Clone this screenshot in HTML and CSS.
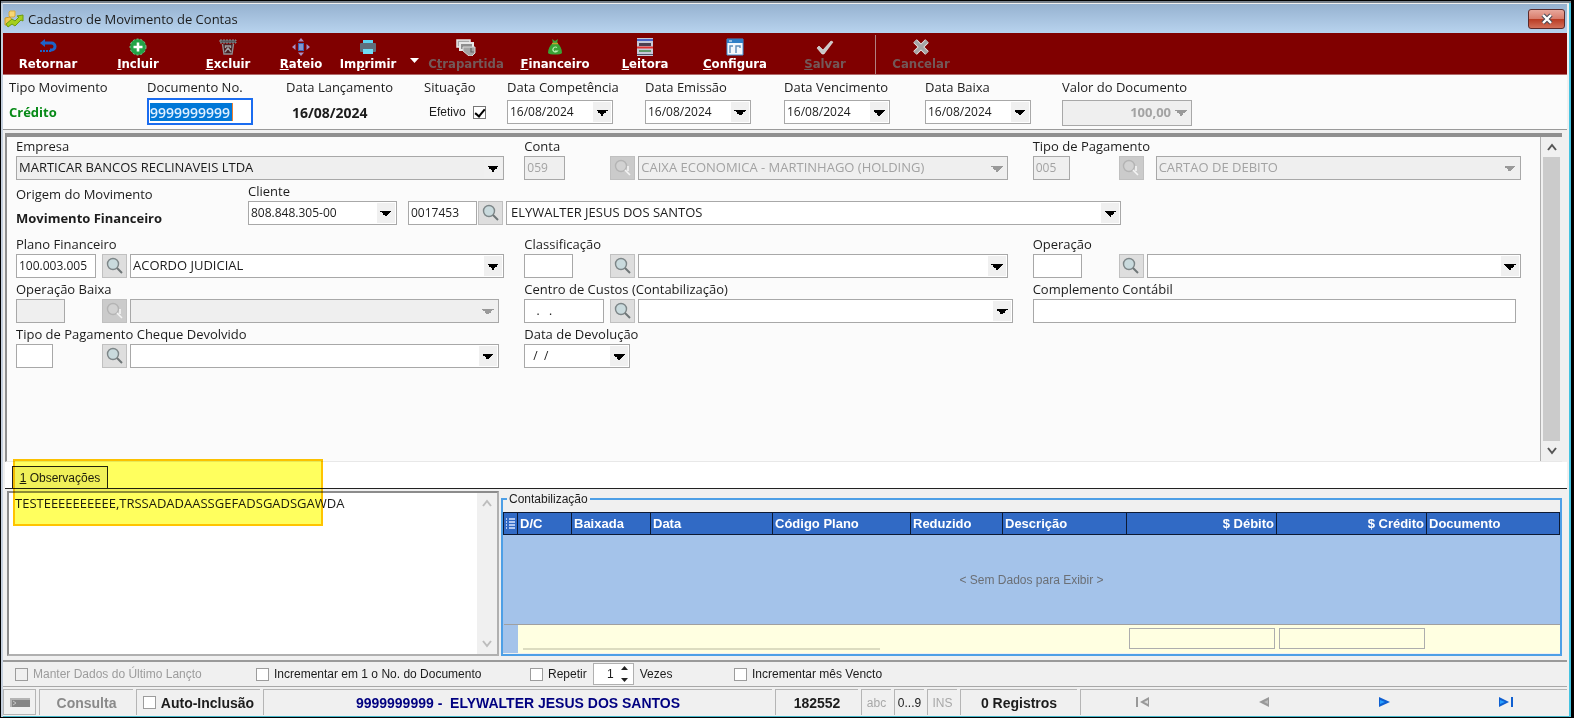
FILE: index.html
```html
<!DOCTYPE html>
<html lang="pt-BR">
<head>
    <meta charset="UTF-8">
    <meta name="viewport" content="width=device-width, initial-scale=1.0">
    <title>Cadastro de Movimento de Contas</title>
    <link rel="stylesheet" href="styles.css">
</head>
<body>
    <svg class="defs" aria-hidden="true">
        <symbol id="lupa" viewBox="0 0 18 18">
            <circle cx="7" cy="7" r="5.500" fill="#c9dadd" stroke="#7d8688" stroke-width="1.4"/>
            <path d="M11 11l5 5" stroke="#6f7678" stroke-width="2"/>
        </symbol>
        <symbol id="lupa-off" viewBox="0 0 18 18">
            <circle cx="7" cy="7" r="5.500" fill="#d2d2d2" stroke="#b4b4b4" stroke-width="1.4"/>
            <path d="M11 11l5 5M14 7v5" stroke="#f4f4f4" stroke-width="1.6"/>
        </symbol>
        <symbol id="seta-cima" viewBox="0 0 10 8"><path d="M1 7l4-5 4 5" fill="none" stroke="currentColor" stroke-width="2"/></symbol>
        <symbol id="seta-baixo" viewBox="0 0 10 8"><path d="M1 1l4 5 4-5" fill="none" stroke="currentColor" stroke-width="2"/></symbol>
    </svg>

    <div class="window">
        <header class="titlebar">
            <svg width="20" height="18" viewBox="0 0 20 18">
                <path d="M6 1h5v5l-1 1H6L5 6V2z" fill="#f7d774" stroke="#d9a93a"/>
                <path d="M1 8l5-1 3 4-3 4H1z" fill="#f3c752" stroke="#c99a2b"/>
                <path d="M2 14l6-5 3 2 4-4-2-1 6-1v6l-2-1-6 6-3-2-4 3z" fill="#a5cf1c" stroke="#6d9a10"/>
            </svg>
            <h1>Cadastro de Movimento de Contas</h1>
            <button class="close" type="button" aria-label="Fechar">
                <svg width="14" height="12" viewBox="0 0 14 12"><path d="M3 2l8 8M11 2l-8 8" stroke="#4a4a55" stroke-width="4.4"/><path d="M3 2l8 8M11 2l-8 8" stroke="#fff" stroke-width="2.4"/></svg>
            </button>
        </header>

        <nav class="toolbar">
            <button type="button">
                <svg width="18" height="18" viewBox="0 0 18 18"><path d="M5 5h7.500a3.500 3.500 0 0 1 0 7H11" fill="none" stroke="#1d63c9" stroke-width="3"/><path d="M1 5l5-4v8z" fill="#1d63c9"/><path d="M1 13h11" stroke="#1d63c9" stroke-width="2" stroke-dasharray="2 1"/></svg>
                <span>Retornar</span>
            </button>
            <button type="button">
                <svg width="18" height="18" viewBox="0 0 18 18"><circle cx="9" cy="9" r="8" fill="#22a447" stroke="#7fc795" stroke-dasharray="2 2"/><path d="M9 4.500v9M4.500 9h9" stroke="#fff" stroke-width="2.600"/></svg>
                <span><u>I</u>ncluir</span>
            </button>
            <button type="button">
                <svg width="18" height="18" viewBox="0 0 18 18"><path d="M1 2h16v3H1z" fill="#58585c" stroke="#8c8c90" stroke-dasharray="2 1"/><path d="M3.500 6l1.500 10h8l1.500-10" fill="#4a2022" stroke="#8f8f93" stroke-width="1.400"/><path d="M6 14l3-4 3 4M6.500 10V8h5v2" fill="none" stroke="#a0a0a4" stroke-width="1.400"/></svg>
                <span><u>E</u>xcluir</span>
            </button>
            <button type="button" class="w-small">
                <svg width="18" height="18" viewBox="0 0 18 18"><rect x="6" y="5" width="6" height="8" fill="#3f63b5"/><path d="M7 7h4M7 9h4M7 11h4" stroke="#c3cdea"/><path d="M9 0l3 3.500H6zM9 18l3-3.500H6zM0 9l3.500-3v6zM18 9l-3.500-3v6z" fill="#a98fc4"/></svg>
                <span><u>R</u>ateio</span>
            </button>
            <button type="button" class="w-print">
                <svg width="18" height="18" viewBox="0 0 18 18"><path d="M4 2h10v4H4z" fill="#5fd3f0"/><rect x="1" y="5" width="16" height="9" rx="1" fill="#5f6f7d"/><path d="M4 11h10v5H4z" fill="#6fdcf5"/></svg>
                <span>Im<u>p</u>rimir</span>
            </button>
            <button type="button" class="w-arrow" aria-label="Opções de impressão">
                <svg width="9" height="5" viewBox="0 0 9 5"><path d="M0 0h9L4.500 5z" fill="#fff"/></svg>
            </button>
            <button type="button" class="w-contra" disabled>
                <svg width="20" height="18" viewBox="0 0 20 18"><path d="M1 2h13v7H1z" fill="#a9a9a9" stroke="#e8e8e8" stroke-width="1.500"/><path d="M4 5h13v7H4z" fill="#8e8e8e" stroke="#e8e8e8" stroke-width="2"/><path d="M7 9h12v6l-3 3h-3l-6-5z" fill="#a4a4a4" stroke="#d8d8d8"/><path d="M15 10v4h3" fill="none" stroke="#666" stroke-width="1.200"/></svg>
                <span>C<u>t</u>rapartida</span>
            </button>
            <button type="button">
                <svg width="18" height="18" viewBox="0 0 18 18"><path d="M7 5L6 1l3 2 3-2-1 4c3 2 5 6 5 10-1 2-13 2-14 0 0-4 2-8 5-10z" fill="#3aa336"/><path d="M6 5.500h6" stroke="#c0a02c" stroke-width="1.500"/><path d="M11 9.500a2.500 2.500 0 1 0 .500 3.500H9" fill="none" stroke="#b9eeb0" stroke-width="1.200"/></svg>
                <span><u>F</u>inanceiro</span>
            </button>
            <button type="button">
                <svg width="18" height="18" viewBox="0 0 18 18"><path d="M1 0h16v18H1z" fill="#c7c9d8"/><path d="M1 1h16v2H1z" fill="#4a62c4"/><path d="M3 5h12v3H3z" fill="#4d4050"/><path d="M1 9.500h16" stroke="#e03030" stroke-width="2"/><path d="M3 12h12v2H3z" fill="#5f9a6a"/><path d="M1 16.500h16" stroke="#50556c"/></svg>
                <span><u>L</u>eitora</span>
            </button>
            <button type="button">
                <svg width="18" height="18" viewBox="0 0 18 18"><path d="M1 1h16v16H1z" fill="#f4f8fc" stroke="#3f93d6"/><path d="M1 1h16v4H1z" fill="#2f7fc6"/><path d="M3 3h3" stroke="#fff"/><path d="M4 15V8h3M10 15V8h4v2" fill="none" stroke="#5d8db8" stroke-width="1.400"/></svg>
                <span><u>C</u>onfigura</span>
            </button>
            <button type="button" disabled>
                <svg width="18" height="18" viewBox="0 0 18 18"><path d="M1 10l2-2 4 4 8-9 2 1-9 12H6z" fill="#c9c9c9" stroke="#efefef" stroke-width=".6"/></svg>
                <span><u>S</u>alvar</span>
            </button>
            <i class="tool-sep"></i>
            <button type="button" disabled>
                <svg width="18" height="18" viewBox="0 0 18 18"><path d="M3 3l12 12M15 3L3 15" stroke="#f0f0f0" stroke-width="5"/><path d="M3 3l12 12M15 3L3 15" stroke="#a5a5a5" stroke-width="3.400"/></svg>
                <span>Cancelar</span>
            </button>
        </nav>

        <section class="top-fields">
            <div class="field">
                <span class="label">Tipo Movimento</span>
                <strong class="value credit">Crédito</strong>
            </div>
            <div class="field">
                <label for="documento">Documento No.</label>
                <div class="doc-box"><input id="documento" type="text" value="9999999999"></div>
            </div>
            <div class="field">
                <span class="label">Data Lançamento</span>
                <strong class="value date">16/08/2024</strong>
            </div>
            <div class="field">
                <span class="label">Situação</span>
                <label class="value check effective"><span>Efetivo</span><input type="checkbox" checked></label>
            </div>
            <div class="field">
                <label for="competencia">Data Competência</label>
                <select id="competencia" class="combo date-combo"><option>16/08/2024</option></select>
            </div>
            <div class="field">
                <label for="emissao">Data Emissão</label>
                <select id="emissao" class="combo date-combo"><option>16/08/2024</option></select>
            </div>
            <div class="field">
                <label for="vencimento">Data Vencimento</label>
                <select id="vencimento" class="combo date-combo"><option>16/08/2024</option></select>
            </div>
            <div class="field">
                <label for="baixa">Data Baixa</label>
                <select id="baixa" class="combo date-combo"><option>16/08/2024</option></select>
            </div>
            <div class="field">
                <label for="valor">Valor do Documento</label>
                <select id="valor" class="combo amount" disabled><option>100,00</option></select>
            </div>
        </section>

        <section class="pane">
            <form class="form">
                <div class="field">
                    <label for="empresa">Empresa</label>
                    <div class="line"><select id="empresa" class="combo grow readonly"><option>MARTICAR BANCOS RECLINAVEIS LTDA</option></select></div>
                </div>
                <div class="field">
                    <label for="conta">Conta</label>
                    <div class="line short">
                        <div class="code"><input id="conta" class="text w41" type="text" value="059" disabled></div>
                        <button type="button" class="search" aria-label="Buscar conta" disabled><svg><use href="#lupa-off"/></svg></button>
                        <select class="combo grow" aria-label="Conta" disabled><option>CAIXA ECONOMICA - MARTINHAGO (HOLDING)</option></select>
                    </div>
                </div>
                <div class="field">
                    <label for="tipo-pag">Tipo de Pagamento</label>
                    <div class="line">
                        <div class="code"><input id="tipo-pag" class="text w37" type="text" value="005" disabled></div>
                        <button type="button" class="search spaced" aria-label="Buscar tipo de pagamento" disabled><svg><use href="#lupa-off"/></svg></button>
                        <select class="combo grow" aria-label="Tipo de pagamento" disabled><option>CARTAO DE DEBITO</option></select>
                    </div>
                </div>

                <div class="client-row">
                    <div class="origin">
                        <span>Origem do Movimento</span>
                        <strong>Movimento Financeiro</strong>
                    </div>
                    <div class="field">
                        <label for="cliente">Cliente</label>
                        <div class="line">
                            <select id="cliente" class="combo client-doc"><option>808.848.305-00</option></select>
                            <input class="text client-code" type="text" value="0017453" aria-label="Código do cliente">
                            <button type="button" class="search" aria-label="Buscar cliente"><svg><use href="#lupa"/></svg></button>
                            <select class="combo client-name" aria-label="Nome do cliente"><option>ELYWALTER JESUS DOS SANTOS</option></select>
                        </div>
                    </div>
                </div>

                <div class="field">
                    <label for="plano">Plano Financeiro</label>
                    <div class="line">
                        <div class="code"><input id="plano" class="text w80" type="text" value="100.003.005"></div>
                        <button type="button" class="search" aria-label="Buscar plano"><svg><use href="#lupa"/></svg></button>
                        <select class="combo grow" aria-label="Plano financeiro"><option>ACORDO JUDICIAL</option></select>
                    </div>
                </div>
                <div class="field">
                    <label for="classificacao">Classificação</label>
                    <div class="line short">
                        <div class="code"><input id="classificacao" class="text w50" type="text"></div>
                        <button type="button" class="search" aria-label="Buscar classificação"><svg><use href="#lupa"/></svg></button>
                        <select class="combo grow" aria-label="Classificação"><option></option></select>
                    </div>
                </div>
                <div class="field">
                    <label for="operacao">Operação</label>
                    <div class="line">
                        <div class="code"><input id="operacao" class="text w50" type="text"></div>
                        <button type="button" class="search" aria-label="Buscar operação"><svg><use href="#lupa"/></svg></button>
                        <select class="combo grow" aria-label="Operação"><option></option></select>
                    </div>
                </div>

                <div class="field">
                    <label for="op-baixa">Operação Baixa</label>
                    <div class="line short">
                        <div class="code"><input id="op-baixa" class="text w50" type="text" disabled></div>
                        <button type="button" class="search" aria-label="Buscar operação baixa" disabled><svg><use href="#lupa-off"/></svg></button>
                        <select class="combo grow" aria-label="Operação baixa" disabled><option></option></select>
                    </div>
                </div>
                <div class="field">
                    <label for="centro">Centro de Custos (Contabilização)</label>
                    <div class="line">
                        <div class="code"><input id="centro" class="text w80 mask" type="text" value=" .   ."></div>
                        <button type="button" class="search" aria-label="Buscar centro de custos"><svg><use href="#lupa"/></svg></button>
                        <select class="combo grow" aria-label="Centro de custos"><option></option></select>
                    </div>
                </div>
                <div class="field">
                    <label for="complemento">Complemento Contábil</label>
                    <div class="line short"><input id="complemento" class="text grow" type="text"></div>
                </div>

                <div class="field">
                    <label for="cheque">Tipo de Pagamento Cheque Devolvido</label>
                    <div class="line short">
                        <div class="code"><input id="cheque" class="text w37" type="text"></div>
                        <button type="button" class="search" aria-label="Buscar tipo de pagamento"><svg><use href="#lupa"/></svg></button>
                        <select class="combo grow" aria-label="Tipo de pagamento cheque devolvido"><option></option></select>
                    </div>
                </div>
                <div class="field">
                    <label for="devolucao">Data de Devolução</label>
                    <select id="devolucao" class="combo date-combo mask"><option>/&nbsp; /</option></select>
                </div>
            </form>
            <div class="scroll">
                <svg><use href="#seta-cima"/></svg>
                <i></i>
                <svg><use href="#seta-baixo"/></svg>
            </div>
        </section>

        <section class="bottom">
            <div class="tabs"><button type="button" class="tab"><u>1</u> Observações</button></div>
            <div class="highlight"></div>
            <div class="panels">
                <div class="memo">
                    <textarea aria-label="Observações" spellcheck="false">TESTEEEEEEEEEE,TRSSADADAASSGEFADSGADSGAWDA</textarea>
                    <div class="scroll off">
                        <svg><use href="#seta-cima"/></svg>
                        <svg><use href="#seta-baixo"/></svg>
                    </div>
                </div>
                <fieldset class="group">
                    <legend>Contabilização</legend>
                    <table>
                        <colgroup>
                            <col class="c-mark"><col class="c-dc"><col class="c-baixada"><col class="c-data"><col class="c-codigo">
                            <col class="c-reduzido"><col class="c-descricao"><col class="c-valor"><col class="c-valor"><col>
                        </colgroup>
                        <thead>
                            <tr>
                                <th><svg width="9" height="12" viewBox="0 0 9 12"><path d="M0 1h1M0 4h1M0 7h1M0 10h1M3 1h6M3 4h6M3 7h6M3 10h6" stroke="#dfe9ff" stroke-width="1.400"/></svg></th>
                                <th>D/C</th>
                                <th>Baixada</th>
                                <th>Data</th>
                                <th>Código Plano</th>
                                <th>Reduzido</th>
                                <th>Descrição</th>
                                <th class="num">$ Débito</th>
                                <th class="num">$ Crédito</th>
                                <th>Documento</th>
                            </tr>
                        </thead>
                        <tbody>
                            <tr><td colspan="10">&lt; Sem Dados para Exibir &gt;</td></tr>
                        </tbody>
                        <tfoot>
                            <tr>
                                <td class="mark"></td>
                                <td colspan="6"><div class="hscroll"></div></td>
                                <td><div class="total"></div></td>
                                <td><div class="total"></div></td>
                                <td></td>
                            </tr>
                        </tfoot>
                    </table>
                </fieldset>
            </div>
        </section>

        <section class="options">
            <label class="check off"><input type="checkbox" disabled><span>Manter Dados do Último Lançto</span></label>
            <label class="check"><input type="checkbox"><span>Incrementar em 1 o No. do Documento</span></label>
            <div class="repeat">
                <label class="check"><input type="checkbox"><span>Repetir</span></label>
                <div class="spinner">
                    <input type="text" value="1" id="vezes">
                    <svg width="9" height="16" viewBox="0 0 9 16"><path d="M1 4l3.500-4L8 4zM1 12l3.500 4L8 12z" fill="#222"/></svg>
                </div>
                <label for="vezes">Vezes</label>
            </div>
            <label class="check"><input type="checkbox"><span>Incrementar mês Vencto</span></label>
        </section>

        <footer class="status">
            <button type="button" class="cell-btn" aria-label="Painel"><svg width="20" height="9" viewBox="0 0 20 9"><path d="M0 0h20v9H0z" fill="#858585"/><path d="M1 9V1h19" fill="none" stroke="#b4b4b4" stroke-width="2"/><path d="M3 3l3 2-3 2" fill="none" stroke="#c4c4c4"/></svg></button>
            <div class="cell consulta">Consulta</div>
            <label class="cell auto check"><input type="checkbox"><span>Auto-Inclusão</span></label>
            <div class="cell person">9999999999 -&nbsp; ELYWALTER JESUS DOS SANTOS</div>
            <div class="cell number">182552</div>
            <div class="cell key dim">abc</div>
            <div class="cell key">0...9</div>
            <div class="cell key dim">INS</div>
            <div class="cell records">0 Registros</div>
            <div class="cell navigator">
                <button type="button" aria-label="Primeiro" disabled><svg width="14" height="10" viewBox="0 0 14 10"><path d="M1 0v10" stroke="#999" stroke-width="2"/><path d="M13 0v10L4 5z" fill="#999"/><path d="M12 3v4L8 5z" fill="#ddd"/></svg></button>
                <button type="button" aria-label="Anterior" disabled><svg width="11" height="10" viewBox="0 0 11 10"><path d="M10 0v10L0 5z" fill="#999"/><path d="M9 3v4L5 5z" fill="#bbb"/></svg></button>
                <button type="button" aria-label="Próximo"><svg width="11" height="10" viewBox="0 0 11 10"><path d="M0 0v10l11-5z" fill="#0f5fd0"/><path d="M1 3v4l5-2z" fill="#28a0ff"/></svg></button>
                <button type="button" aria-label="Último"><svg width="14" height="10" viewBox="0 0 14 10"><path d="M13 0v10" stroke="#0f5fd0" stroke-width="2"/><path d="M0 0v10l10-5z" fill="#0f5fd0"/><path d="M1 3v4l5-2z" fill="#28a0ff"/></svg></button>
            </div>
        </footer>
    </div>
</body>
</html>
```
FILE: styles.css
```css
* {
    box-sizing: border-box;
}
body {
    margin: 0;
    background-color: #000;
    color: #1c1c1c;
    font-family: "Open Sans", "Noto Sans", sans-serif;
    font-size: 13px;
}
button, input, select, textarea {
    font: inherit;
    color: inherit;
    margin: 0;
}
button {
    padding: 0;
    border: 0;
    background: none;
}
.defs {
    position: absolute;
    width: 0;
    height: 0;
}
.window {
    display: flex;
    flex-direction: column;
    min-height: 100vh;
    border: 1px solid #000;
    border-right-width: 3px;
    background-color: #f0f0f0;
    box-shadow: inset 0 2px #77818c, inset -2px 0 #45c3e0, inset 2px 0 #c5d0de, inset 0 -1px #45b5c8;
    padding: 3px 4px 1px 2px;
}

/* title bar */
.titlebar {
    display: flex;
    align-items: center;
    gap: 4px;
    height: 29px;
    padding: 0 2px 0 1px;
    background: linear-gradient(#96b2d0, #b8d3ee);
}
.titlebar h1 {
    flex: 1;
    margin: 0;
    font-size: 13px;
    font-weight: normal;
}
.close {
    display: flex;
    align-items: center;
    justify-content: center;
    width: 37px;
    height: 20px;
    border: 1px solid #5b2a2a;
    border-radius: 3px;
    background: linear-gradient(#e8a79b 0%, #d87c6c 48%, #b93a22 50%, #d2705a 100%);
}

/* toolbar */
.toolbar {
    display: flex;
    height: 42px;
    border-bottom: 1px solid #b06a6a;
    background-color: #800000;
    color: #fff;
    font-family: "DejaVu Sans Condensed", "DejaVu Sans", sans-serif;
    font-size: 13px;
    font-weight: bold;
}
.toolbar button {
    display: flex;
    flex-direction: column;
    align-items: center;
    width: 90px;
    padding-top: 5px;
    line-height: 16px;
}
.toolbar button:disabled {
    color: #735858;
}
.toolbar .w-small {
    width: 56px;
}
.toolbar .w-print {
    width: 78px;
}
.toolbar .w-arrow {
    width: 15px;
    padding-top: 25px;
}
.toolbar .w-contra {
    width: 88px;
}
.tool-sep {
    width: 1px;
    margin: 2px 0 0 5px;
    background-color: #b08080;
}

/* fields */
.field {
    display: flex;
    flex-direction: column;
    align-items: flex-start;
    min-width: 0;
}
.field > label:first-child, .field > .label {
    margin-bottom: 2px;
    line-height: 16px;
    white-space: nowrap;
}
.line {
    display: flex;
    align-self: stretch;
    gap: 3px;
}
.short {
    padding-right: 5px;
}
.grow {
    flex: 1;
    min-width: 0;
}
.text, .combo {
    height: 24px;
    border: 1px solid #a8a8a8;
    border-radius: 0;
    background-color: #fff;
    padding: 0 2px 2px;
    outline: 0;
}
.text, .date-combo, .client-doc {
    font-size: 12px;
}
.combo {
    appearance: none;
    padding-right: 20px;
    background-image:
        linear-gradient(to top right, transparent 50%, #000 50%),
        linear-gradient(to top left, transparent 50%, #000 50%),
        linear-gradient(#f0f0f0, #f0f0f0);
    background-position: right 10px top 9px, right 4px top 9px, right 1px top 1px;
    background-size: 6px 6px, 6px 6px, 18px 20px;
    background-repeat: no-repeat;
}
.readonly {
    background-color: #efefef;
}
.text:disabled, .combo:disabled {
    background-color: #efefef;
    color: #a3a3a3;
    opacity: 1;
}
.combo:disabled {
    background-image:
        linear-gradient(to top right, transparent 50%, #999 50%),
        linear-gradient(to top left, transparent 50%, #999 50%);
}
.date-combo {
    width: 106px;
}
.mask {
    padding-left: 8px;
}
.w37 { width: 37px; }
.w41 { width: 41px; }
.w50 { width: 49px; }
.w80 { width: 80px; }
.code {
    display: flex;
    width: 83px;
}
.search {
    display: flex;
    align-items: center;
    justify-content: center;
    width: 25px;
    height: 24px;
    border: 1px solid #c0c0c0;
    background-color: #dedede;
}
.search svg {
    width: 18px;
    height: 18px;
}
.search:disabled {
    background-color: #cbcbcb;
}
.spaced {
    margin-right: 9px;
}

/* checkboxes */
.check {
    display: flex;
    align-items: center;
    gap: 5px;
}
.check input {
    appearance: none;
    width: 13px;
    height: 13px;
    border: 1px solid #9c9c9c;
    background-color: #fff;
}
.check input:checked {
    border-color: #777;
}
.check input:checked::before {
    content: "";
    display: block;
    width: 4px;
    height: 8px;
    margin: 0 0 0 3px;
    border: solid #000;
    border-width: 0 2px 2px 0;
    transform: rotate(40deg);
}

.top-fields {
    display: grid;
    grid-template-columns: 138px 139px 138px 83px 138px 139px 141px 137px 1fr;
    height: 55px;
    padding: 4px 0 0 6px;
    border-bottom: 1px solid #9a9a9a;
    background-color: #fbfbfb;
}
.top-fields .combo {
    margin-top: 3px;
}
.value {
    display: flex;
    align-items: center;
    height: 30px;
}
.credit {
    color: #078a17;
}
.date {
    padding-left: 6px;
    font-size: 14px;
}
.effective {
    padding-left: 5px;
    gap: 7px;
    font-family: "Liberation Sans", sans-serif;
    font-size: 12px;
}
.doc-box {
    margin-top: 1px;
    width: 106px;
    height: 27px;
    border: 2px solid #1a6cf0;
    background-color: #fff;
    padding: 3px 1px;
}
.doc-box input {
    display: block;
    width: 83px;
    height: 18px;
    padding: 0;
    border: 0;
    border-right: 1px solid #f08030;
    outline: 0;
    background-color: #0078d7;
    color: #dff0ff;
    font-size: 14px;
    font-weight: 600;
}
.top-fields .amount {
    width: 130px;
    height: 26px;
    font-weight: bold;
    text-align-last: right;
}

/* main form */
.pane {
    display: flex;
    flex: 1;
    margin: 3px 5px 0 2px;
    border: 2px solid #8f8f8f;
    border-top-width: 4px;
    border-right: 0;
    border-bottom-color: #e8e8e8;
    border-bottom-width: 1px;
    background-color: #fbfbfb;
}
.form {
    display: grid;
    grid-template-columns: 1fr 1fr 1fr;
    grid-auto-rows: max-content;
    column-gap: 20px;
    row-gap: 3px;
    flex: 1;
    padding: 1px 19px 0 9px;
}
.client-row {
    grid-column: 1 / -1;
    display: flex;
    margin-bottom: 5px;
}
.client-row .field {
    flex: 1;
}
.origin {
    display: flex;
    flex-direction: column;
    gap: 5px;
    width: 232px;
    padding-top: 2px;
    line-height: 19px;
}
.client-doc {
    width: 149px;
    margin-right: 8px;
}
.client-code {
    width: 69px;
}
.client-name {
    width: 615px;
    padding-left: 4px;
}
.client-row .search {
    margin-left: -2px;
}
.scroll {
    display: flex;
    flex-direction: column;
    align-items: center;
    width: 22px;
    padding: 6px 0;
    border-left: 1px solid #b0b0b0;
    background-color: #f0f0f0;
    color: #555;
}
.scroll svg {
    width: 10px;
    height: 8px;
}
.scroll i {
    flex: 1;
    width: 17px;
    margin: 6px 0;
    background-color: #cbcbcb;
}

/* notes and accounting grid */
.bottom {
    position: relative;
    margin-left: 2px;
}
.tabs {
    display: flex;
    align-items: flex-end;
    height: 27px;
    padding-left: 7px;
    border-bottom: 1px solid #222;
    background-color: #fff;
}
.tab {
    width: 96px;
    height: 22px;
    border: 1px solid #222;
    border-bottom: 0;
    background-color: #f0f0f0;
}
.tab, .group, .options, .status {
    font-family: "Liberation Sans", sans-serif;
    font-size: 12px;
}
.highlight {
    position: absolute;
    top: -3px;
    left: 8px;
    z-index: 1;
    width: 310px;
    height: 67px;
    border: 2px solid #ffc400;
    background-color: #ffff5e;
    mix-blend-mode: multiply;
    pointer-events: none;
}
.panels {
    display: flex;
    gap: 2px;
    padding: 2px 5px 4px 2px;
}
.memo {
    display: flex;
    width: 492px;
    height: 165px;
    border: 2px solid #8c8c8c;
    border-right-color: #b0b0b0;
    border-bottom-color: #b0b0b0;
    background-color: #fff;
}
.memo textarea {
    flex: 1;
    min-width: 0;
    padding: 1px 6px;
    border: 0;
    outline: 0;
    resize: none;
    overflow: hidden;
    background: none;
    line-height: 18px;
}
.scroll.off {
    justify-content: space-between;
    width: 20px;
    border: 0;
    color: #bdbdbd;
}
.group {
    flex: 1;
    min-width: 0;
    margin: 0;
    padding: 0;
    border: 2px solid #4d9fe6;
}
.group legend {
    margin-left: 4px;
    padding: 0 2px;
    line-height: 16px;
}
.group table {
    width: 100%;
    margin-top: 5px;
    border-collapse: collapse;
    table-layout: fixed;
    background-color: #a4c3ea;
}
.c-mark { width: 14px; }
.c-dc { width: 54px; }
.c-baixada { width: 79px; }
.c-data { width: 122px; }
.c-codigo { width: 138px; }
.c-reduzido { width: 92px; }
.c-descricao { width: 124px; }
.c-valor { width: 150px; }
.group th {
    height: 22px;
    padding: 0 2px;
    border: 1px solid #0d1a33;
    background-color: #316ac5;
    color: #fff;
    font-size: 13px;
    text-align: left;
}
.group th svg {
    display: block;
}
.group .num {
    text-align: right;
}
.group tbody td {
    height: 90px;
    padding: 0;
    color: #6b6f75;
    text-align: center;
}
.group tfoot td {
    height: 28px;
    padding: 0 2px;
    border-top: 1px solid #a0a0a0;
    background-color: #ffffe1;
}
.group tfoot .mark {
    background-color: #a4c3ea;
}
.total {
    height: 21px;
    border: 1px solid #adadad;
}
.hscroll {
    width: 357px;
    height: 2px;
    margin: 20px 0 0 3px;
    background-color: #dcdcc0;
}

/* options */
.options {
    display: flex;
    align-items: center;
    height: 27px;
    padding-left: 12px;
    border-top: 2px solid #9a9a9a;
    border-bottom: 1px solid #a8a8a8;
}
.options > .check:nth-child(1) {
    width: 241px;
}
.options > .check:nth-child(2) {
    width: 274px;
}
.off {
    color: #9c9c9c;
}
.check.off input {
    background-color: #f0f0f0;
}
.repeat {
    display: flex;
    align-items: center;
    gap: 6px;
    width: 204px;
}
.spinner {
    display: flex;
    align-items: center;
    width: 41px;
    height: 22px;
    border: 1px solid #b0b0b0;
    background-color: #fff;
}
.spinner input {
    width: 22px;
    padding: 0 2px;
    border: 0;
    background: none;
    text-align: right;
}
.spinner svg {
    margin-left: 4px;
}

/* status bar */
.status {
    display: flex;
    gap: 3px;
    height: 29px;
    padding: 2px 0 1px;
    line-height: 16px;
}
.cell, .cell-btn {
    display: flex;
    align-items: center;
    justify-content: center;
    border-top: 1px solid #b5b5b5;
    border-left: 1px solid #b5b5b5;
}
.cell-btn {
    width: 33px;
    border: 1px solid #b5b5b5;
}
.consulta, .auto, .person, .number, .records {
    font-size: 14px;
    font-weight: bold;
}
.consulta {
    width: 94px;
    color: #8a8a8a;
}
.auto {
    width: 124px;
}
.person {
    width: 509px;
    color: #000080;
}
.number {
    width: 83px;
}
.key {
    width: 30px;
}
.dim {
    color: #a8a8a8;
}
.records {
    width: 117px;
}
.navigator {
    flex: 1;
    justify-content: space-around;
}
```
